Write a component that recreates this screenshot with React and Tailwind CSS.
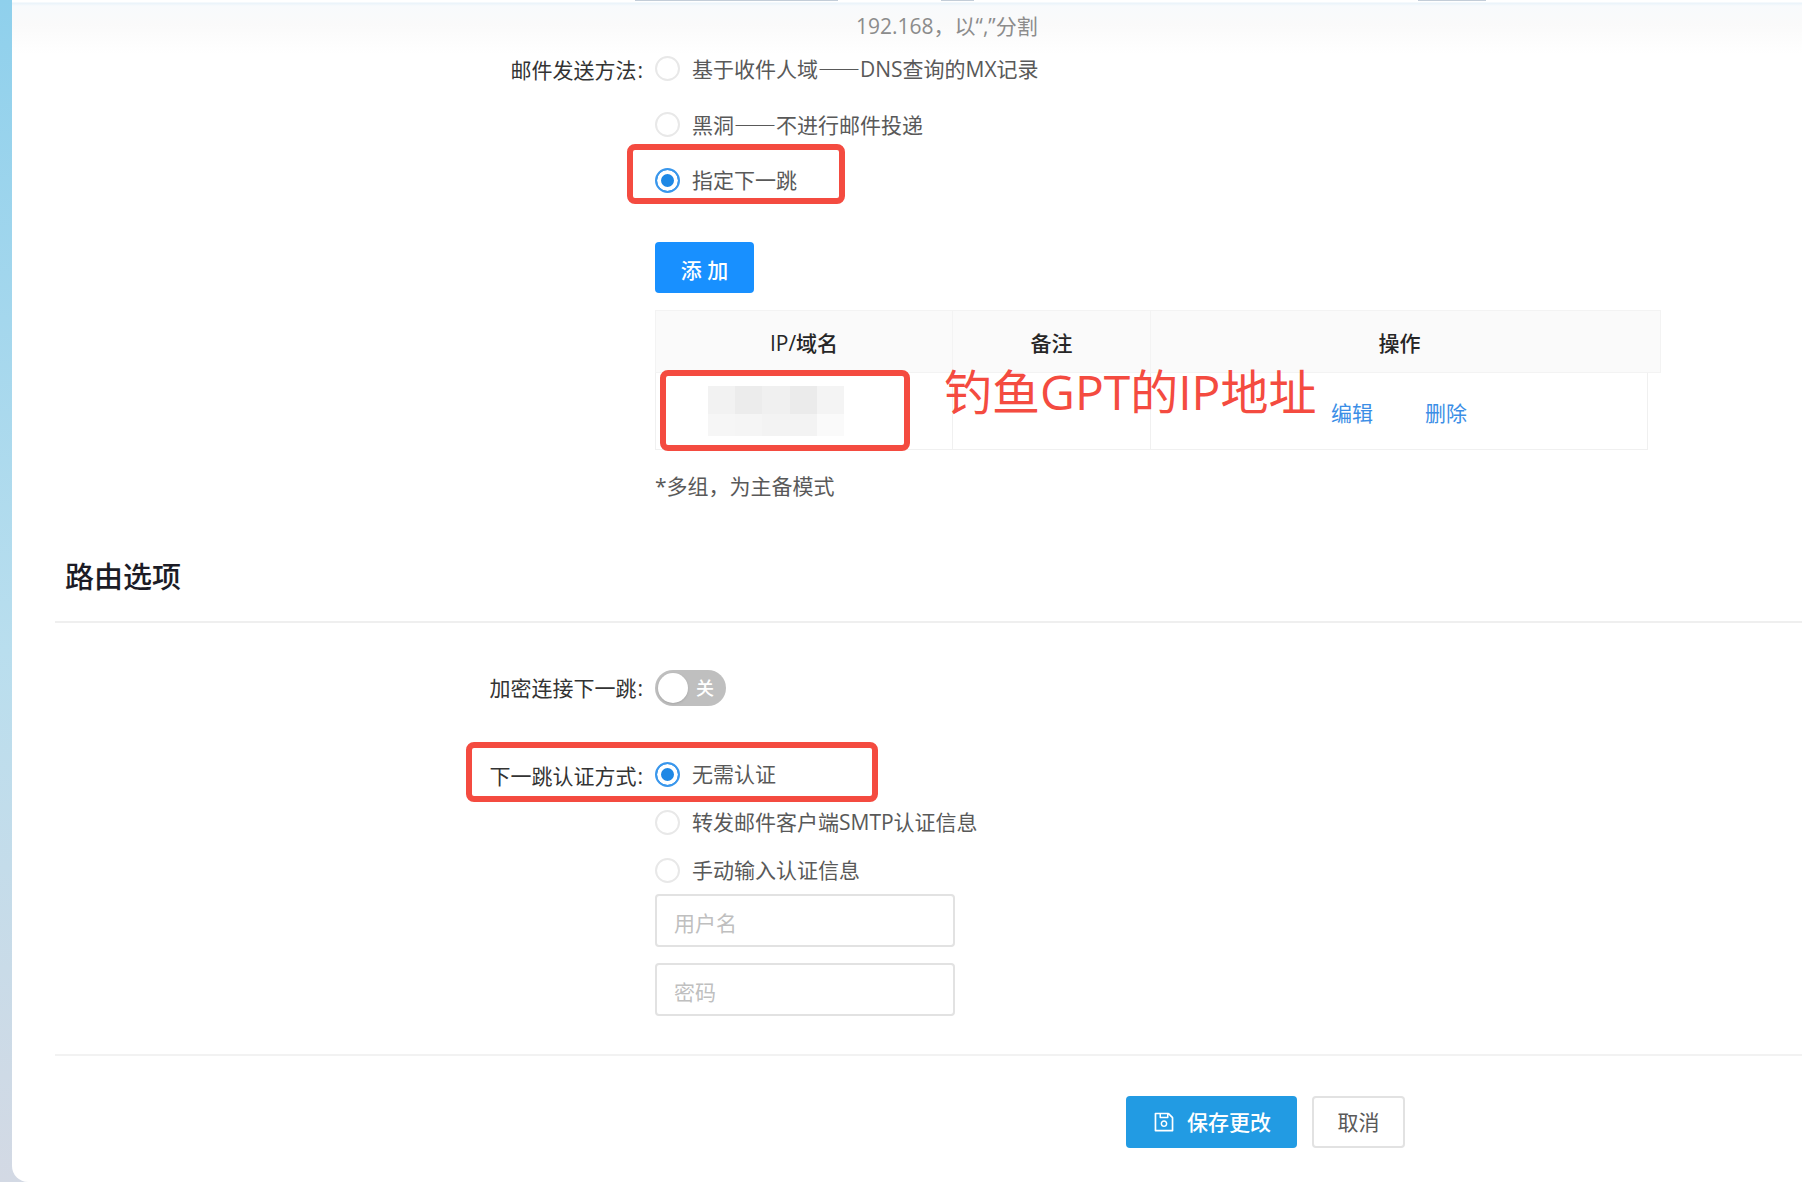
import { useState } from "react";
import { AiOutlineSave } from "react-icons/ai";
import clsx from "clsx";

const sendMethods = [
  { value: "mx", text: ["基于收件人域", "DNS查询的MX记录"] },
  { value: "blackhole", text: ["黑洞", "不进行邮件投递"] },
  { value: "nexthop", text: ["指定下一跳"] },
];

const authMethods = [
  { value: "none", text: ["无需认证"] },
  { value: "forward", text: ["转发邮件客户端SMTP认证信息"] },
  { value: "manual", text: ["手动输入认证信息"] },
];

function Highlight({ className }) {
  return (
    <span
      aria-hidden="true"
      className={clsx("pointer-events-none absolute rounded-lg border-[6px] border-[#f44b40]", className)}
    />
  );
}

function Field({ label, htmlFor, id, className, children }) {
  const Label = htmlFor ? "label" : "div";
  return (
    <div className={clsx("relative grid grid-cols-[minmax(0,600fr)_minmax(0,1147fr)]", className)}>
      <Label id={id} htmlFor={htmlFor} className="pr-3 text-right leading-9 text-[#333]">
        {label}
        {label && <span className="ml-px">:</span>}
      </Label>
      <div>{children}</div>
    </div>
  );
}

function RadioOption({ name, value, text, checked, onChange, children }) {
  return (
    <label className="relative flex h-8 w-fit items-center gap-3">
      <input
        type="radio"
        name={name}
        value={value}
        checked={checked}
        onChange={() => onChange(value)}
        className="size-[25px] shrink-0 appearance-none rounded-full border-2 border-[#e8e8e8] bg-white checked:border-[#3a97ec] checked:bg-[#1e88e5] checked:shadow-[inset_0_0_0_4px_#fff]"
      />
      <span>
        {text[0]}
        {text[1] && <span className="font-['Noto_Sans_CJK_SC',sans-serif] font-medium">——</span>}
        {text[1]}
      </span>
      {children}
    </label>
  );
}

// Masked address, two rows of five blocks
function MaskedAddress() {
  return (
    <div className="mx-auto grid w-[137px] grid-cols-5 grid-rows-[28px_22px]">
      <i className="bg-[#f2f2f2]" />
      <i className="bg-[#ececec]" />
      <i className="bg-[#f0f0f0]" />
      <i className="bg-[#ebebeb]" />
      <i className="bg-[#f4f4f4]" />
      <i className="bg-[#f6f6f6]" />
      <i className="bg-[#f5f5f5]" />
      <i className="bg-[#f3f3f3]" />
      <i className="bg-[#f3f3f3]" />
      <i className="bg-[#fafafa]" />
    </div>
  );
}

function HopTable() {
  return (
    <div className="relative mt-[17px] mr-[141px]">
      <table className="w-full table-fixed border-separate border-spacing-0 text-center">
        <colgroup>
          <col className="w-[298px]" />
          <col className="w-[198px]" />
          <col />
          <col className="w-[13px]" />
        </colgroup>
        <thead className="bg-[#fafafa] text-[#262626]">
          <tr className="h-[63px]">
            <th className="border border-[#f3f3f3] pt-0.5 font-medium">IP/域名</th>
            <th className="border-y border-r border-[#f3f3f3] pt-0.5 font-medium">备注</th>
            <th className="border-y border-[#f3f3f3] pt-0.5 font-medium">操作</th>
            <td className="border-y border-r border-[#f3f3f3]" />
          </tr>
        </thead>
        <tbody>
          <tr className="h-[77px]">
            <td className="border-r border-b border-l border-[#f0f0f0] pr-14">
              <MaskedAddress />
            </td>
            <td className="border-r border-b border-[#f0f0f0]" />
            <td className="border-r border-b border-[#f0f0f0] pt-1">
              <div className="flex justify-center gap-[52px] text-[#3b8ee6]">
                <a href="#edit">编辑</a>
                <a href="#delete">删除</a>
              </div>
            </td>
            <td />
          </tr>
        </tbody>
      </table>
      <Highlight className="top-[60px] left-[5px] h-[81px] w-[250px]" />
      <span className="pointer-events-none absolute top-[48px] left-[289px] text-[48px] leading-[68px] whitespace-nowrap text-[#f44b40]">
        钓鱼GPT的IP地址
      </span>
    </div>
  );
}

export default function App() {
  const [method, setMethod] = useState("nexthop");
  const [auth, setAuth] = useState("none");
  const [encrypted, setEncrypted] = useState(false);

  const inputClass =
    "h-[53px] w-[300px] rounded border-2 border-[#e2e2e2] bg-white px-[17px] pt-1 placeholder:text-[#bfbfbf] outline-none";

  return (
    <div
      lang="zh-CN"
      className="min-h-screen bg-linear-to-b from-[#8fd0ec] via-[#b9deee] via-55% to-[#d3d9e4] pl-3 font-['Open_Sans','Noto_Sans_CJK_SC',sans-serif] text-[21px] leading-8 text-[#595959]"
    >
      <main className="relative min-h-screen overflow-hidden rounded-bl-2xl bg-white bg-[linear-gradient(#fff_0px,#fff_2px,#e9f3fa_3px,#f8fafc_6px,#fafafa_24px,#fff_54px)] pb-[34px]">
        {/* lower edges of the fields scrolled off the top */}
        <div aria-hidden="true" className="absolute top-0 left-[623px] flex h-px">
          <i className="w-[203px] bg-[#c3cdd8]" />
          <i className="ml-[103px] w-[33px] bg-[#c3cdd8]" />
          <i className="ml-[444px] w-[68px] bg-[#c3cdd8]" />
        </div>

        <form className="ml-[43px]" onSubmit={(e) => e.preventDefault()}>
          <Field className="pt-[6px]">
            <p className="pl-[201px] leading-10 text-[#8c8c8c]">192.168，以“,”分割</p>
          </Field>

          <Field label="邮件发送方法" id="method-label" className="pt-[6px]">
            <div role="radiogroup" aria-labelledby="method-label" className="flex flex-col gap-6">
              {sendMethods.map((m) => (
                <RadioOption key={m.value} name="method" {...m} checked={method === m.value} onChange={setMethod}>
                  {m.value === "nexthop" && (
                    <Highlight className="-top-5 -left-7 h-[60px] w-[218px]" />
                  )}
                </RadioOption>
              ))}
            </div>
            <button
              type="button"
              className="mt-[46px] block h-[51px] w-[99px] rounded bg-[#1890ff] pt-1 font-medium text-white"
            >
              添 加
            </button>
            <HopTable />
            <p className="mt-5">*多组，为主备模式</p>
          </Field>

          <h2 className="mt-[55px] border-b-2 border-[#efefef] pb-6 pl-[10px] text-[29px] leading-10 font-medium text-[#1c1c26]">
            路由选项
          </h2>

          <Field label="加密连接下一跳" htmlFor="encrypt" className="mt-[47px]">
            <div className="relative h-9 w-[71px]">
              <input
                id="encrypt"
                type="checkbox"
                role="switch"
                checked={encrypted}
                onChange={(e) => setEncrypted(e.target.checked)}
                className="block h-9 w-[71px] appearance-none rounded-full bg-[#bfbfbf] checked:bg-[#1890ff]"
              />
              <span
                className={clsx(
                  "pointer-events-none absolute top-[3px] size-[30px] rounded-full bg-white shadow",
                  encrypted ? "right-[3px]" : "left-[3px]"
                )}
              />
              <span
                className={clsx(
                  "pointer-events-none absolute top-0 text-lg leading-9 font-medium text-white",
                  encrypted ? "left-3" : "right-3"
                )}
              >
                {encrypted ? "开" : "关"}
              </span>
            </div>
          </Field>

          <Field label="下一跳认证方式" id="auth-label" className="mt-[52px]">
            <div role="radiogroup" aria-labelledby="auth-label" className="flex flex-col gap-4">
              {authMethods.map((m) => (
                <RadioOption key={m.value} name="auth" {...m} checked={auth === m.value} onChange={setAuth}>
                  {m.value === "none" && (
                    <Highlight className="-top-4 -left-[189px] h-[60px] w-[412px]" />
                  )}
                </RadioOption>
              ))}
            </div>
            <div className="mt-2 flex flex-col gap-4">
              <input type="text" aria-label="用户名" placeholder="用户名" className={inputClass} />
              <input type="password" aria-label="密码" placeholder="密码" className={inputClass} />
            </div>
          </Field>

          <div className="mt-[38px] flex justify-end gap-[15px] border-t-2 border-[#f2f2f2] pt-10 pr-[397px]">
            <button
              type="submit"
              className="flex h-[52px] w-[171px] items-center justify-center gap-[11px] rounded bg-[#229be3] font-medium text-white"
            >
              <AiOutlineSave size={24} />
              <span>保存更改</span>
            </button>
            <button type="button" className="h-[52px] w-[93px] rounded border-2 border-[#e2e2e2] bg-white">
              取消
            </button>
          </div>
        </form>
      </main>
    </div>
  );
}
